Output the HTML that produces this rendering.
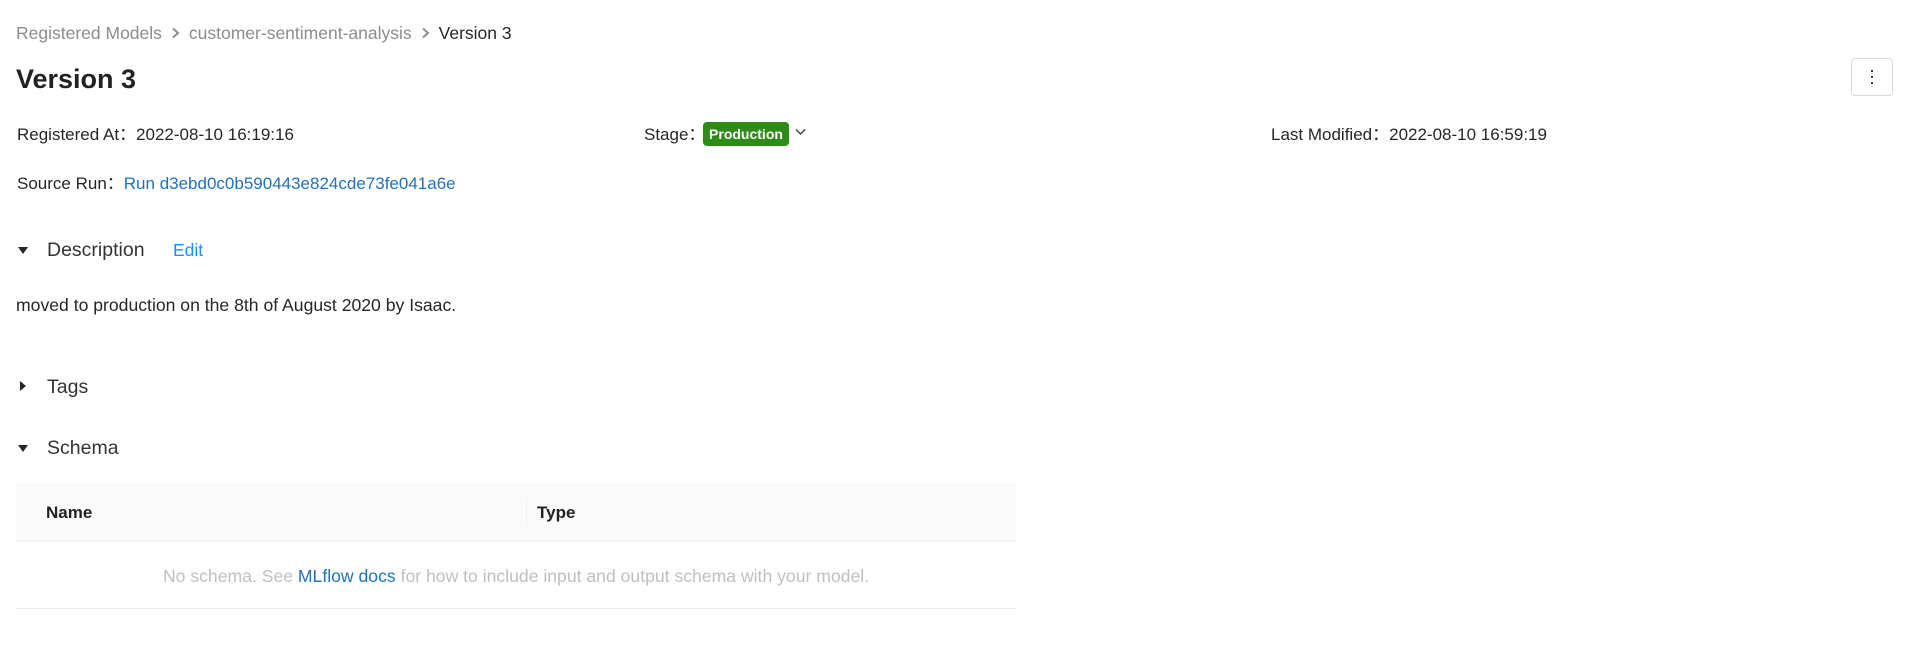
<!DOCTYPE html>
<html><head><meta charset="utf-8"><style>
body{margin:0;width:1912px;height:672px;background:#fff;font-family:"Liberation Sans",sans-serif;color:#262626;position:relative;overflow:hidden}
.a{position:absolute;white-space:nowrap;line-height:1}
.bc{font-size:17.5px;color:#8c8c8c;top:25px;left:16px}
.bc .s{display:inline-block;margin:0 9px;color:#8c8c8c}
.bc .c{color:#262626}
.h{font-size:27px;font-weight:600;top:66px;left:16px;color:#222}
.t{font-size:17px}
.b{font-size:17.6px}
.blue{color:#2272b9}
.sec{font-size:19.5px;color:#333}
.tri{width:0;height:0;position:absolute}
</style></head><body>
<div class="a bc">Registered Models<span class="s"><svg width="9" height="12" viewBox="0 0 9 12"><path d="M2 1.5 L7 6 L2 10.5" fill="none" stroke="#8c8c8c" stroke-width="2"/></svg></span>customer-sentiment-analysis<span class="s"><svg width="9" height="12" viewBox="0 0 9 12"><path d="M2 1.5 L7 6 L2 10.5" fill="none" stroke="#8c8c8c" stroke-width="2"/></svg></span><span class="c">Version 3</span></div>
<div class="a h">Version 3</div>
<div style="position:absolute;left:1851px;top:58px;width:42px;height:38px;border:1px solid #d9d9d9;border-radius:4px;box-sizing:border-box">
<div style="position:absolute;left:19px;top:11px;width:2px;height:2px;background:#333"></div>
<div style="position:absolute;left:19px;top:17px;width:2px;height:2px;background:#333"></div>
<div style="position:absolute;left:19px;top:23px;width:2px;height:2px;background:#333"></div></div>
<div class="a t" style="left:17px;top:126px">Registered At：2022-08-10 16:19:16</div>
<div class="a t" style="left:644px;top:126px">Stage：</div>
<div class="a" style="left:703px;top:122px;width:86px;height:24px;background:#2e8b16;border-radius:4px;color:#fff;font-size:14px;font-weight:bold;line-height:24px;text-align:center">Production</div>
<svg class="a" style="left:795px;top:128px" width="11" height="8" viewBox="0 0 11 8"><path d="M1 1.5 L5.5 6 L10 1.5" fill="none" stroke="#333" stroke-width="1.3"/></svg>
<div class="a t" style="left:1271px;top:126px">Last Modified：2022-08-10 16:59:19</div>
<div class="a t" style="left:17px;top:175px">Source Run：<span class="blue">Run d3ebd0c0b590443e824cde73fe041a6e</span></div>
<div class="tri" style="left:18px;top:247px;border-left:5px solid transparent;border-right:5px solid transparent;border-top:7px solid #262626"></div>
<div class="a sec" style="left:47px;top:241px">Description</div>
<div class="a" style="left:173px;top:242px;font-size:17.5px;color:#1890ff">Edit</div>
<div class="a b" style="left:16px;top:297px">moved to production on the 8th of August 2020 by Isaac.</div>
<div class="tri" style="left:20px;top:381px;border-top:5px solid transparent;border-bottom:5px solid transparent;border-left:6px solid #262626"></div>
<div class="a sec" style="left:47px;top:378px">Tags</div>
<div class="tri" style="left:18px;top:445px;border-left:5px solid transparent;border-right:5px solid transparent;border-top:7px solid #262626"></div>
<div class="a sec" style="left:47px;top:439px">Schema</div>
<div style="position:absolute;left:16px;top:483px;width:1000px;height:57px;background:#fafafa;border-bottom:1px solid #ececec"></div>
<div style="position:absolute;left:526px;top:498px;width:1px;height:28px;background:#eee"></div>
<div class="a t" style="left:46px;top:504px;font-weight:bold;color:#222">Name</div>
<div class="a t" style="left:537px;top:504px;font-weight:bold;color:#222">Type</div>
<div class="a b" style="left:16px;width:1000px;text-align:center;top:568px;color:#bfbfbf">No schema. See <span class="blue">MLflow docs</span> for how to include input and output schema with your model.</div>
<div style="position:absolute;left:16px;top:608px;width:1000px;height:1px;background:#ececec"></div>
</body></html>
